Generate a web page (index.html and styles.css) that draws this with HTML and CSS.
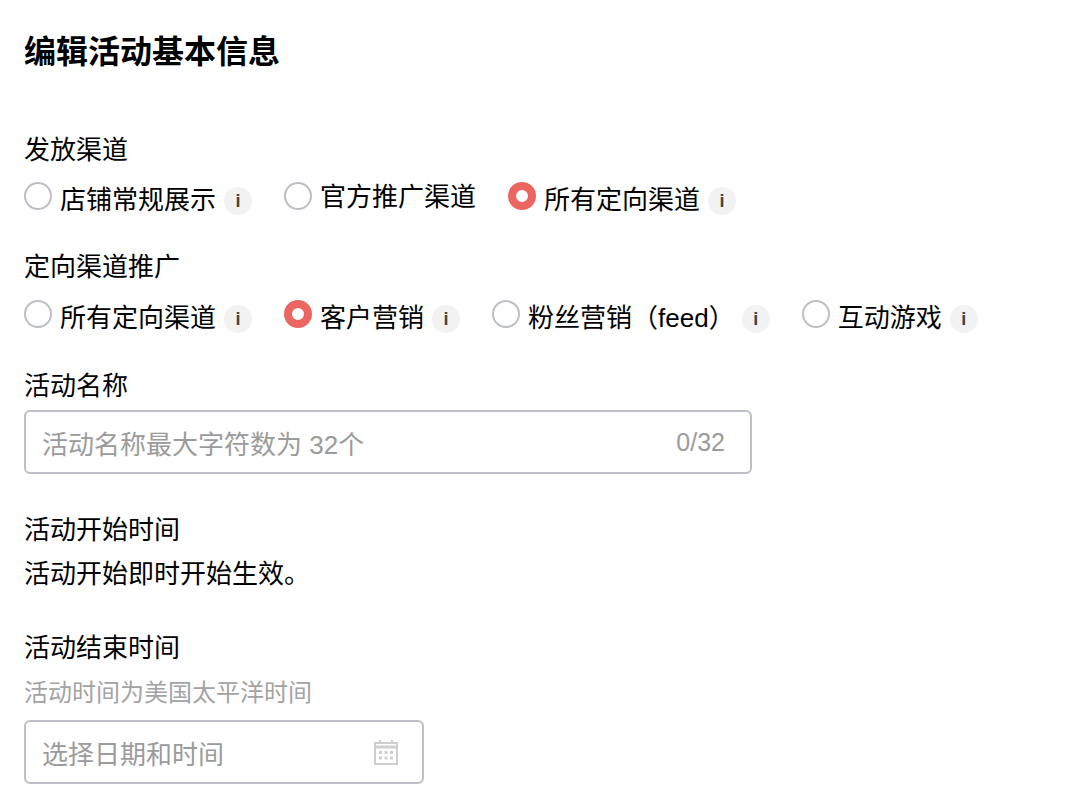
FILE: index.html
```html
<!DOCTYPE html>
<html lang="zh-CN">
<head>
  <meta charset="UTF-8">
  <meta name="viewport" content="width=device-width, initial-scale=1.0">
  <title>编辑活动基本信息</title>
  <link rel="stylesheet" href="styles.css">
</head>
<body>
  <div class="container">
    <h1>编辑活动基本信息</h1>

    <div class="form-group channel-group">
      <div class="label">发放渠道</div>
      <div class="radio-row">
        <div class="radio-item item-store">
          <span class="radio"></span>
          <span class="radio-text">店铺常规展示</span>
          <span class="info">i</span>
        </div>
        <div class="radio-item item-official">
          <span class="radio"></span>
          <span class="radio-text raised">官方推广渠道</span>
        </div>
        <div class="radio-item">
          <span class="radio checked"></span>
          <span class="radio-text">所有定向渠道</span>
          <span class="info">i</span>
        </div>
      </div>
    </div>

    <div class="form-group target-group">
      <div class="label">定向渠道推广</div>
      <div class="radio-row">
        <div class="radio-item item-store">
          <span class="radio"></span>
          <span class="radio-text">所有定向渠道</span>
          <span class="info">i</span>
        </div>
        <div class="radio-item item-customer">
          <span class="radio checked"></span>
          <span class="radio-text">客户营销</span>
          <span class="info">i</span>
        </div>
        <div class="radio-item item-fans">
          <span class="radio"></span>
          <span class="radio-text">粉丝营销（feed）</span>
          <span class="info">i</span>
        </div>
        <div class="radio-item">
          <span class="radio"></span>
          <span class="radio-text">互动游戏</span>
          <span class="info">i</span>
        </div>
      </div>
    </div>

    <div class="form-group name-group">
      <div class="label">活动名称</div>
      <div class="input-box name-input">
        <span class="placeholder">活动名称最大字符数为 32个</span>
        <span class="counter">0/32</span>
      </div>
    </div>

    <div class="form-group start-group">
      <div class="label">活动开始时间</div>
      <div class="plain-text">活动开始即时开始生效。</div>
    </div>

    <div class="form-group">
      <div class="label">活动结束时间</div>
      <div class="hint">活动时间为美国太平洋时间</div>
      <div class="input-box date-input">
        <span class="placeholder">选择日期和时间</span>
        <svg class="calendar" width="24" height="25" viewBox="0 0 24 25" fill="none">
          <path d="M6 0v4M18 0v4" stroke="#cfcfcf" stroke-width="2"/>
          <rect x="1" y="3" width="22" height="21" stroke="#cfcfcf" stroke-width="2"/>
          <path d="M1 7h22" stroke="#cfcfcf" stroke-width="3"/>
          <path d="M5 11h3v3H5zM10.500 11h3v3h-3zM16 11h3v3h-3zM5 16.500h3v3H5zM10.500 16.500h3v3h-3zM16 16.500h3v3h-3z" fill="#cfcfcf"/>
        </svg>
      </div>
    </div>
  </div>
</body>
</html>
```

FILE: styles.css
```css
body {
  font-family: "Liberation Sans", "Noto Sans CJK SC", sans-serif;
  background-color: #fff;
  color: #000;
  margin: 0;
  overflow: hidden;
}

.container {
  padding: 32px 24px 0;
}

h1 {
  font-size: 32px;
  line-height: 40px;
  font-weight: bold;
  margin: 0 0 61px;
}

.label {
  font-size: 26px;
  line-height: 34px;
}

.form-group {
  margin-bottom: 32px;
}

.channel-group {
  margin-bottom: 30px;
}

.target-group {
  margin-bottom: 31px;
}

.target-group .radio-row {
  margin-top: 16px;
}

.name-group {
  margin-bottom: 39px;
}

.start-group {
  margin-bottom: 39px;
}

.radio-row {
  display: flex;
  align-items: flex-start;
  margin-top: 15px;
  height: 38px;
}

.radio-item {
  display: flex;
  align-items: flex-start;
}

.item-store {
  margin-right: 32px;
}

.item-official {
  margin-right: 32px;
}

.item-customer {
  margin-right: 32px;
}

.item-fans {
  margin-right: 32px;
}

.item-fans .info {
  margin-left: 7px;
}

.radio {
  width: 28px;
  height: 28px;
  box-sizing: border-box;
  border: 2px solid #bcc0c6;
  border-radius: 50%;
  margin-right: 8px;
  background-color: #fff;
}

.radio.checked {
  border: 8px solid #eb6561;
}

.radio-text {
  font-size: 26px;
  line-height: 36px;
}

.raised {
  margin-top: -3px;
}

.info {
  width: 28px;
  height: 28px;
  border-radius: 50%;
  background-color: #f2f2f2;
  margin: 5px 0 0 8px;
  text-align: center;
  font-size: 18px;
  font-weight: bold;
  line-height: 28px;
  color: #444;
}

.input-box {
  display: flex;
  justify-content: space-between;
  align-items: center;
  box-sizing: border-box;
  border: 2px solid #bcc0c6;
  border-radius: 6px;
  height: 64px;
  padding: 0 24px 0 16px;
  margin-top: 7px;
  font-size: 26px;
}

.name-input {
  width: 728px;
}

.date-input {
  width: 400px;
  margin-top: 11px;
}

.placeholder,
.counter {
  color: #9b9b9b;
}

.counter {
  font-size: 25px;
  margin-right: 1px;
}

.plain-text {
  font-size: 26px;
  line-height: 36px;
  margin-top: 9px;
}

.hint {
  font-size: 24px;
  line-height: 32px;
  margin-top: 12px;
  color: #a3a3a3;
}
```
